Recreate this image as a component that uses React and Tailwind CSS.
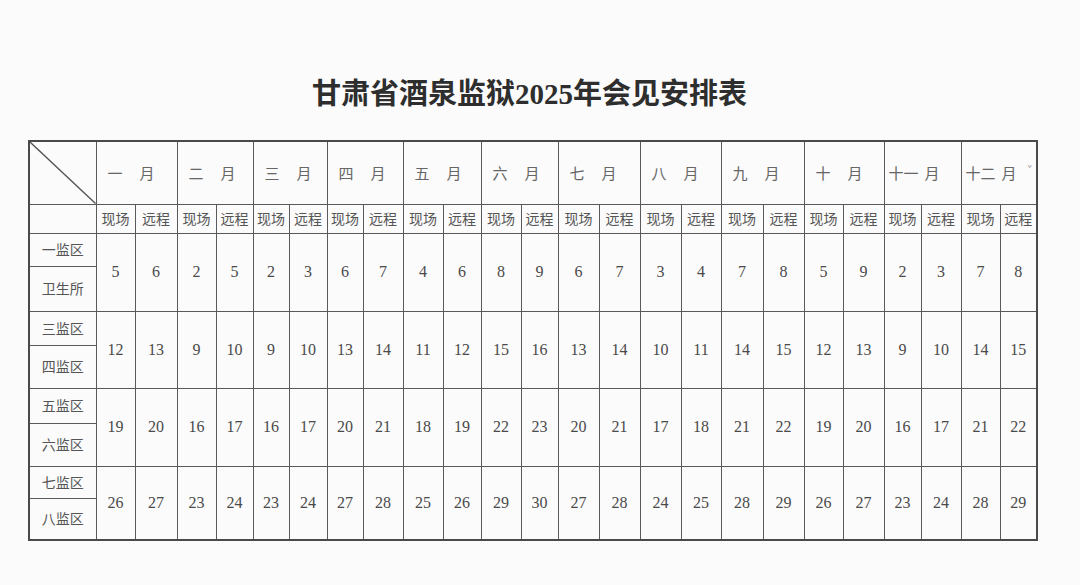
import React from 'react';

const months = ['一', '二', '三', '四', '五', '六', '七', '八', '九', '十', '十一', '十二'];

// sub-column widths, 现场/远程 per month
const cols = [
  'w-[39px]', 'w-[42px]', 'w-[39px]', 'w-[37px]', 'w-[36px]', 'w-[38px]',
  'w-[36px]', 'w-[40px]', 'w-[40px]', 'w-[38px]', 'w-[40px]', 'w-[37px]',
  'w-[41px]', 'w-[41px]', 'w-[41px]', 'w-[40px]', 'w-[42px]', 'w-[41px]',
  'w-[39px]', 'w-[41px]', 'w-[37px]', 'w-[40px]', 'w-[39px]', 'w-[37px]',
];

const groups = [
  { labels: ['一监区', '卫生所'], h: ['h-[33px]', 'h-[45px]'], nums: [5, 6, 2, 5, 2, 3, 6, 7, 4, 6, 8, 9, 6, 7, 3, 4, 7, 8, 5, 9, 2, 3, 7, 8] },
  { labels: ['三监区', '四监区'], h: ['h-[34px]', 'h-[43px]'], nums: [12, 13, 9, 10, 9, 10, 13, 14, 11, 12, 15, 16, 13, 14, 10, 11, 14, 15, 12, 13, 9, 10, 14, 15] },
  { labels: ['五监区', '六监区'], h: ['h-[35px]', 'h-[43px]'], nums: [19, 20, 16, 17, 16, 17, 20, 21, 18, 19, 22, 23, 20, 21, 17, 18, 21, 22, 19, 20, 16, 17, 21, 22] },
  { labels: ['七监区', '八监区'], h: ['h-[32px]', 'h-[42px]'], nums: [26, 27, 23, 24, 23, 24, 27, 28, 25, 26, 29, 30, 27, 28, 24, 25, 28, 29, 26, 27, 23, 24, 28, 29] },
];

const line = 'border-[1.5px] border-[#5a5a5a] p-0';
const cjk = "font-['Noto_Sans_CJK_SC','Noto_Sans',sans-serif]";
const serif = "font-['Liberation_Serif','Noto_Sans_CJK_SC',serif]";

const App = () => {
  return (
    <div className="w-[1080px] h-[585px] bg-[#fbfbfb] overflow-hidden">
      <h1 className={`${serif} pt-[78px] pl-[312px] text-[29px] leading-[32px] font-bold text-[#2e2e2e] whitespace-nowrap`}>
        甘肃省酒泉监狱2025年会见安排表
      </h1>
      <div className="pl-[28px] pt-[30px]">
        <table className="w-[1008px] border-collapse table-fixed border-2 border-[#4a4a4a]">
          <colgroup>
            <col className="w-[67px]" />
            {cols.map((c, i) => (
              <col key={i} className={c} />
            ))}
          </colgroup>
          <tbody>
            <tr className="h-[63px]">
              <td className={`${line} relative`}>
                <svg className="absolute inset-0 w-full h-full" viewBox="0 0 100 100" preserveAspectRatio="none">
                  <line x1="0" y1="0" x2="100" y2="100" stroke="#555" strokeWidth="1.4" vectorEffect="non-scaling-stroke" />
                </svg>
              </td>
              {months.map((m) => (
                <td key={m} colSpan={2} className={`${line} ${cjk} text-[15px] text-[#666]`}>
                  <div className={`flex items-center ${m.length > 1 ? 'pl-[4px]' : 'pl-[11px]'}`}>
                    <span>{m}</span>
                    <span className={m.length > 1 ? 'ml-[6px]' : 'ml-[17px]'}>月</span>
                    {m === '十二' && <span className="ml-auto mr-[4px] -mt-[8px] text-[8px] text-[#999]">ˇ</span>}
                  </div>
                </td>
              ))}
            </tr>
            <tr className="h-[29px]">
              <td className={line}></td>
              {cols.map((_, i) => (
                <td key={i} className={`${line} ${cjk} text-center text-[14px] text-[#555] whitespace-nowrap`}>
                  {i % 2 === 0 ? '现场' : '远程'}
                </td>
              ))}
            </tr>
            {groups.map((g) => (
              <React.Fragment key={g.labels[0]}>
                <tr className={g.h[0]}>
                  <td className={`${line} ${cjk} text-center text-[14px] text-[#555]`}>{g.labels[0]}</td>
                  {g.nums.map((n, i) => (
                    <td key={i} rowSpan={2} className={`${line} ${serif} text-center text-[16px] text-[#4a4a4a]`}>
                      {n}
                    </td>
                  ))}
                </tr>
                <tr className={g.h[1]}>
                  <td className={`${line} ${cjk} text-center text-[14px] text-[#555]`}>{g.labels[1]}</td>
                </tr>
              </React.Fragment>
            ))}
          </tbody>
        </table>
      </div>
    </div>
  );
};

export default App;
